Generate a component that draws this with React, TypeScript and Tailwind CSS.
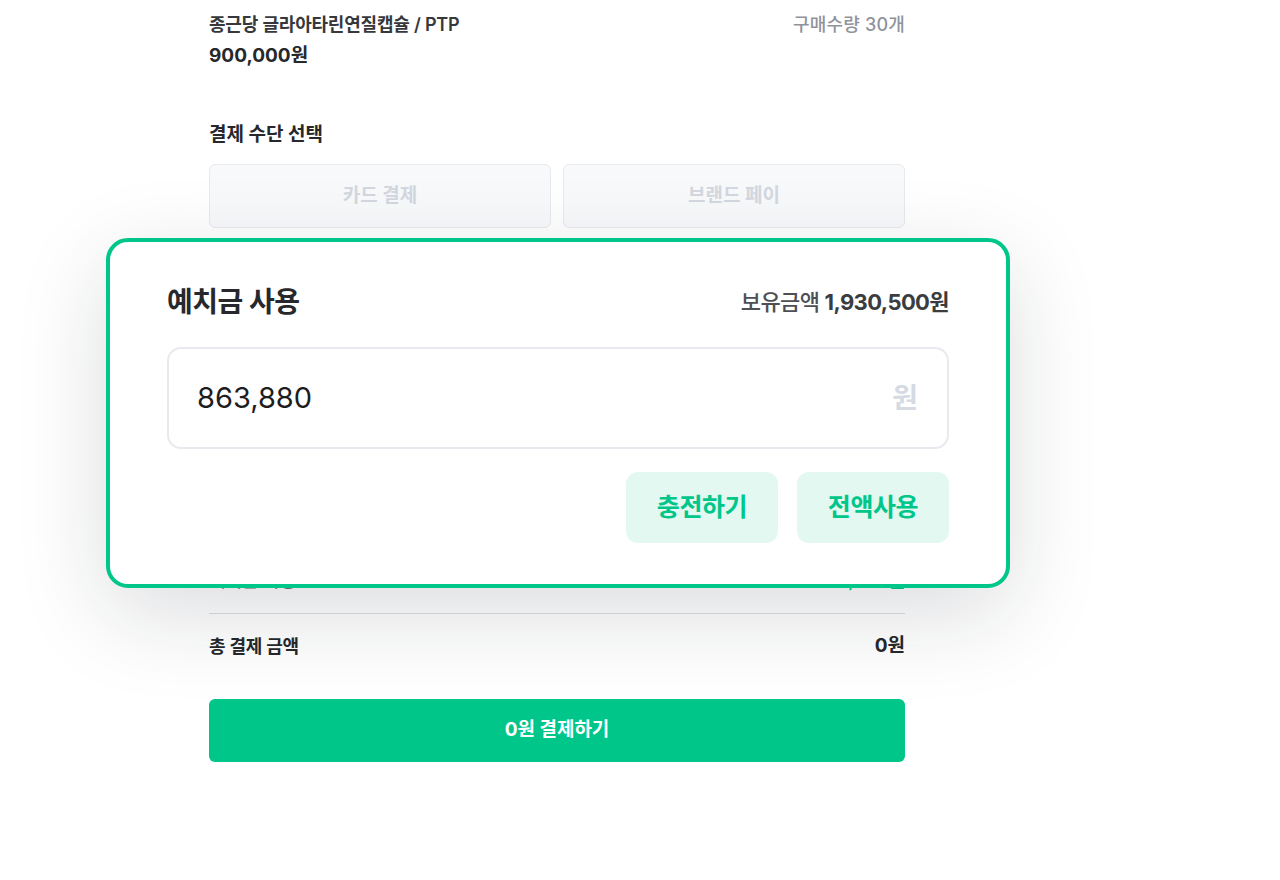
const font = { fontFamily: 'Inter, "Noto Sans CJK KR", sans-serif' };

export default function App() {
  const methods = ["카드 결제", "브랜드 페이"];

  return (
    <div className="min-h-[880px] w-full bg-white overflow-hidden" style={font}>
      <div className="relative ml-[209px] w-[696px] pt-3">
        {/* product */}
        <div className="flex items-center justify-between h-6">
          <span className="text-[18px] font-semibold text-[#36383c] tracking-[-0.2px]">
            종근당 글라아타린연질캡슐 / PTP
          </span>
          <span className="text-[18px] font-medium text-[#8f939c] tracking-[0.2px]">구매수량 30개</span>
        </div>
        <div className="mt-[7px] h-[26px] text-[19px] font-bold leading-[26px] text-[#26282b]">900,000원</div>

        {/* payment method */}
        <div className="mt-[54px] h-6 text-[19px] font-bold leading-6 text-[#26282b]">결제 수단 선택</div>
        <div className="mt-[17px] grid grid-cols-2 gap-3">
          {methods.map((m) => (
            <button
              key={m}
              className="h-16 rounded-md border border-[#e8eaee] bg-[#f8f9fb] text-[19px] font-bold text-[#d3d7df]"
            >
              {m}
            </button>
          ))}
        </div>

        {/* section under the card */}
        <div className="mt-[10px] h-[354px] flex flex-col justify-end">
          <div className="flex items-center justify-between h-6">
            <span className="text-[18px] font-medium text-[#6b6e75]">예치금 사용</span>
            <span className="text-[18px] font-semibold text-[#00c68a]">-863,880원</span>
          </div>
        </div>

        <div className="mt-[21px] border-t border-[#dcdde0]" />

        <div className="mt-[20px] flex items-center justify-between h-6">
          <span className="text-[18px] font-bold text-[#26282b] tracking-[-0.2px]">총 결제 금액</span>
          <span className="text-[19px] font-bold text-[#26282b]">0원</span>
        </div>

        <button className="mt-[41px] h-[63px] w-full rounded-md bg-[#00c68a] text-[19px] font-bold text-white">
          0원 결제하기
        </button>

        {/* overlay card */}
        <div className="absolute left-[-103px] top-[238px] w-[904px] rounded-[22px] border-4 border-[#00c68a] bg-white px-[57px] pt-[42px] pb-[41px] shadow-[0_26px_90px_rgba(20,24,40,0.15)]">
          <div className="flex items-center justify-between h-9">
            <span className="text-[28px] font-bold text-[#26282c] tracking-[-0.5px]">예치금 사용</span>
            <span className="text-[22px] tracking-[-0.6px]">
              <span className="font-medium text-[#4d4f55]">보유금액 </span>
              <span className="font-bold text-[#3a3c40]">1,930,500원</span>
            </span>
          </div>
          <div className="mt-[27px] flex h-[102px] items-center justify-between rounded-[14px] border-2 border-[#e9eaef] pl-[28px] pr-[29px]">
            <span className="text-[29px] text-[#1d1d1f]">863,880</span>
            <span className="text-[28px] font-semibold text-[#d6dae3]">원</span>
          </div>
          <div className="mt-[23px] flex justify-end gap-[19px]">
            <button className="h-[71px] w-[152px] rounded-xl bg-[#e2f8f0] text-[25px] font-bold text-[#00c68a] tracking-[-0.4px]">
              충전하기
            </button>
            <button className="h-[71px] w-[152px] rounded-xl bg-[#e2f8f0] text-[25px] font-bold text-[#00c68a] tracking-[-0.4px]">
              전액사용
            </button>
          </div>
        </div>
      </div>
    </div>
  );
}
